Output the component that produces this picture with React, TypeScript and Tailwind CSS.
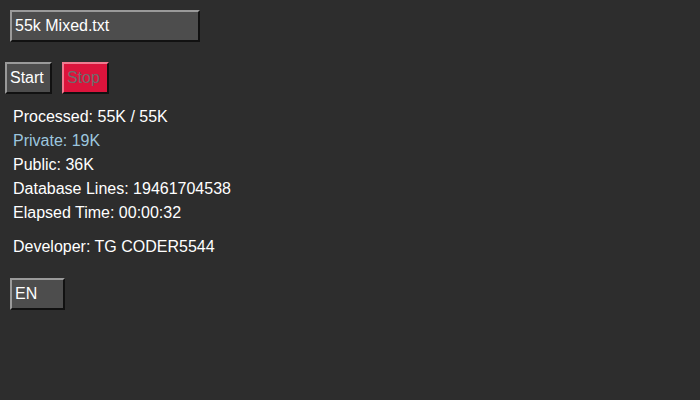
import React from 'react';

export default function App() {
  const stats = [
    { label: 'Processed: 55K / 55K', color: 'text-white' },
    { label: 'Private: 19K', color: 'text-[#9cc6df]' },
    { label: 'Public: 36K', color: 'text-white' },
    { label: 'Database Lines: 19461704538', color: 'text-white' },
    { label: 'Elapsed Time: 00:00:32', color: 'text-white' },
  ];

  return (
    <div className="w-[700px] h-[400px] bg-[#2d2d2d] font-['Liberation_Sans',Arial,sans-serif] text-[16px] text-white">
      <div className="pt-[10px] pl-[10px]">
        <div className="w-[190px] h-[32px] bg-[#4d4d4d] border-2 border-t-[#9a9a9a] border-l-[#9a9a9a] border-b-[#111111] border-r-[#111111] pl-[3px] flex items-center">
          55k Mixed.txt
        </div>
      </div>

      <div className="flex gap-[10px] pl-[5px] mt-[20px]">
        <button className="w-[47px] h-[32px] bg-[#4d4d4d] border-2 border-t-[#9a9a9a] border-l-[#9a9a9a] border-b-[#111111] border-r-[#111111] px-[3px] flex items-center text-white">
          Start
        </button>
        <button className="w-[47px] h-[32px] bg-[#dc143c] border-2 border-t-[#f07a8f] border-l-[#f07a8f] border-b-[#111111] border-r-[#111111] px-[3px] flex items-center text-[#6d6d6d]">
          Stop
        </button>
      </div>

      <div className="pl-[13px] mt-[11px] leading-[24px]">
        {stats.map((s) => (
          <div key={s.label} className={s.color}>
            {s.label}
          </div>
        ))}
        <div className="mt-[10px]">Developer: TG CODER5544</div>
      </div>

      <div className="pl-[10px] mt-[19px]">
        <div className="w-[55px] h-[32px] bg-[#4d4d4d] border-2 border-t-[#9a9a9a] border-l-[#9a9a9a] border-b-[#111111] border-r-[#111111] pl-[3px] flex items-center">
          EN
        </div>
      </div>
    </div>
  );
}
